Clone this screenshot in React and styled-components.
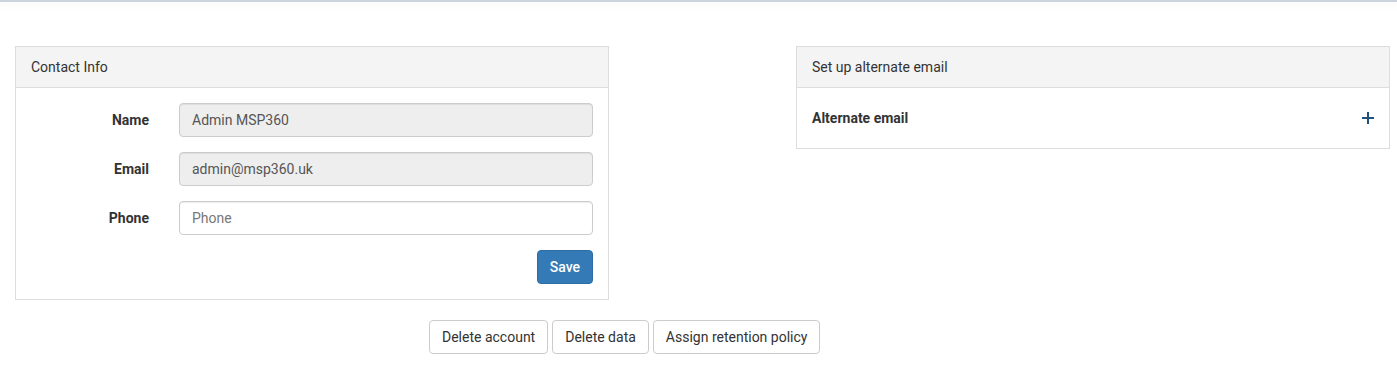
import React from 'react';
import styled, { createGlobalStyle } from 'styled-components';

const GlobalStyle = createGlobalStyle`
    body {
        margin: 0;
        background: #fff;
        font-family: Roboto, "Liberation Sans", Arial, sans-serif;
        font-size: 14px;
        color: #333;
    }
    * { box-sizing: border-box; }
`;

const TopShadow = styled.div`
    height: 2px;
    background: #cdd3dc;
    box-shadow: 0 2px 10px rgba(60, 70, 90, 0.1);
`;

const Main = styled.div`
    padding: 44px 0 0 15px;
`;

const PanelRow = styled.div`
    display: grid;
    grid-template-columns: 594px 594px;
    column-gap: 187px;
    align-items: start;
`;

const Panel = styled.div`
    border: 1px solid #ddd;
    background: #fff;
`;

const PanelHeading = styled.div`
    background: #f4f4f4;
    border-bottom: 1px solid #ddd;
    padding: 10px 15px;
    line-height: 20px;
    color: #333;
`;

const PanelBody = styled.div`
    padding: ${(p) => (p.$tall ? '20px 15px' : '15px')};
`;

const FormRow = styled.div`
    display: grid;
    grid-template-columns: 118px 1fr;
    column-gap: 30px;
    align-items: center;
    margin-bottom: 15px;
`;

const Label = styled.label`
    text-align: right;
    font-weight: 700;
    line-height: 20px;
`;

const Input = styled.input`
    height: 34px;
    width: 100%;
    padding: 6px 12px;
    font-family: inherit;
    font-size: 14px;
    color: #555;
    background: ${(p) => (p.disabled ? '#eee' : '#fff')};
    border: 1px solid #ccc;
    border-radius: 4px;
    box-shadow: inset 0 1px 1px rgba(0, 0, 0, 0.075);
    &::placeholder { color: #777; }
`;

const Actions = styled.div`
    display: flex;
    justify-content: flex-end;
`;

const Button = styled.button`
    height: 34px;
    padding: 6px 12px;
    font-family: inherit;
    font-size: 14px;
    line-height: 20px;
    border-radius: 4px;
    cursor: pointer;
    border: 1px solid ${(p) => (p.$primary ? '#2e6da4' : '#ccc')};
    background: ${(p) => (p.$primary ? '#337ab7' : '#fff')};
    color: ${(p) => (p.$primary ? '#fff' : '#333')};
    font-weight: ${(p) => (p.$primary ? 500 : 400)};
`;

const AltRow = styled.div`
    display: flex;
    justify-content: space-between;
    align-items: center;
    line-height: 20px;
    font-weight: 700;
`;

const PlusIcon = styled.span`
    display: flex;
    color: #23527c;
`;

const BottomBar = styled.div`
    display: flex;
    gap: 4px;
    margin: 20px 0 0 414px;
`;

const App = () => {
    return (
        <>
            <GlobalStyle />
            <TopShadow />
            <Main>
                <PanelRow>
                    <Panel>
                        <PanelHeading>Contact Info</PanelHeading>
                        <PanelBody>
                            <FormRow>
                                <Label>Name</Label>
                                <Input disabled value="Admin MSP360" readOnly />
                            </FormRow>
                            <FormRow>
                                <Label>Email</Label>
                                <Input disabled value="admin@msp360.uk" readOnly />
                            </FormRow>
                            <FormRow>
                                <Label>Phone</Label>
                                <Input placeholder="Phone" />
                            </FormRow>
                            <Actions>
                                <Button $primary>Save</Button>
                            </Actions>
                        </PanelBody>
                    </Panel>
                    <Panel>
                        <PanelHeading>Set up alternate email</PanelHeading>
                        <PanelBody $tall>
                            <AltRow>
                                <span>Alternate email</span>
                                <PlusIcon>
                                    <svg width="12" height="12" viewBox="0 0 12 12">
                                        <path d="M6 0v12M0 6h12" stroke="currentColor" strokeWidth="2" />
                                    </svg>
                                </PlusIcon>
                            </AltRow>
                        </PanelBody>
                    </Panel>
                </PanelRow>
                <BottomBar>
                    <Button>Delete account</Button>
                    <Button>Delete data</Button>
                    <Button>Assign retention policy</Button>
                </BottomBar>
            </Main>
        </>
    );
};

export default App;
